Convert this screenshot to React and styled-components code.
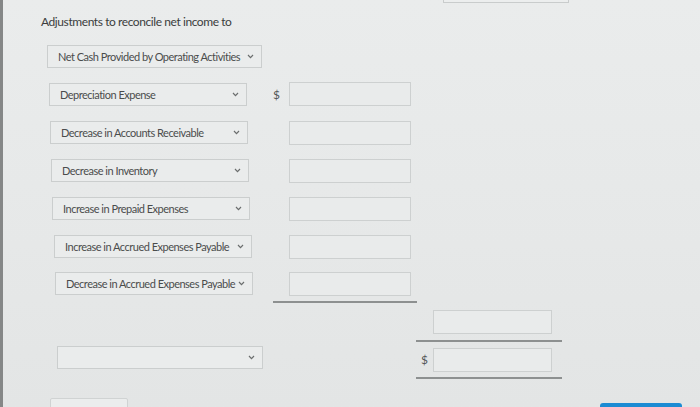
import React from 'react';
import styled, { createGlobalStyle } from 'styled-components';

const GlobalStyle = createGlobalStyle`
  html, body {
    margin: 0;
    padding: 0;
    background: #e7e9e9;
    overflow: hidden;
  }
`;

const Page = styled.div`
  width: 697px;
  height: 407px;
  overflow: hidden;
  border-left: 3px solid #858787;
  background: linear-gradient(180deg, #eaecec 0%, #e6e8e8 60%, #e3e5e5 100%);
  font-family: Lato, "Open Sans", sans-serif;
  color: #3f4141;
`;

const TopStub = styled.div`
  margin-left: 440px;
  width: 124px;
  height: 2px;
  border: 1px solid #c9cccc;
  border-top: none;
  background: #eceeee;
`;

const Heading = styled.div`
  margin: 9px 0 0 38px;
  font-size: 12px;
  line-height: 20px;
  color: #3b3d3d;
  letter-spacing: -0.42px;
`;

const Row = styled.div`
  display: grid;
  grid-template-columns: 270px 144px 146px;
  align-items: center;
  height: ${(p) => p.$h || 38}px;
  margin-top: ${(p) => p.$top || 0}px;
`;

const SelectCell = styled.div`
  padding-left: ${(p) => p.$indent}px;
`;

const SelectBox = styled.div`
  display: flex;
  align-items: center;
  justify-content: space-between;
  box-sizing: border-box;
  width: ${(p) => p.$w || 198}px;
  height: 23px;
  padding: 0 7px 0 ${(p) => p.$pad || 10}px;
  border: 1px solid #cbcece;
  background: #eaecec;
  font-size: 11px;
  color: #4a4c4c;
  letter-spacing: -0.5px;
  white-space: nowrap;
`;

const Chevron = () => (
  <svg width="7" height="5" viewBox="0 0 7 5" style={{ flexShrink: 0 }}>
    <path d="M1 1 L3.5 3.6 L6 1" fill="none" stroke="#6b6e6e" strokeWidth="1.2" />
  </svg>
);

const AmountCell = styled.div`
  display: flex;
  align-items: center;
  padding-left: ${(p) => p.$pad || 0}px;
  margin-top: ${(p) => p.$shift || 0}px;
`;

const Dollar = styled.span`
  width: ${(p) => p.$w || 16}px;
  font-size: 12px;
  color: #555858;
  visibility: ${(p) => (p.$show ? 'visible' : 'hidden')};
`;

const Input = styled.div`
  box-sizing: border-box;
  width: ${(p) => p.$w || 122}px;
  height: 24px;
  border: 1px solid #cdd0d0;
  background: #e9ebeb;
`;

const Rule = styled.div`
  margin-left: ${(p) => p.$left}px;
  width: ${(p) => p.$w}px;
  height: 2px;
  background: #8d9090;
`;

const Footer = styled.div`
  display: flex;
  align-items: flex-start;
  margin-top: 19px;
`;

const BottomStub = styled.div`
  margin-left: 47px;
  width: 76px;
  height: 14px;
  border: 1px solid #d0d3d3;
  border-radius: 2px;
  background: #ebeded;
`;

const BlueBar = styled.div`
  margin: 5px 0 0 472px;
  width: 82px;
  height: 6px;
  border-radius: 3px 3px 0 0;
  background: #1c8bd3;
`;

const rows = [
  { label: 'Depreciation Expense', indent: 46, dollar: true },
  { label: 'Decrease in Accounts Receivable', indent: 47, shift: 2 },
  { label: 'Decrease in Inventory', indent: 48, shift: 2 },
  { label: 'Increase in Prepaid Expenses', indent: 49, shift: 1 },
  { label: 'Increase in Accrued Expenses Payable', indent: 51, shift: 1 },
  { label: 'Decrease in Accrued Expenses Payable', indent: 52, shift: 1, h: 36 },
];

export default function App() {
  return (
    <>
      <GlobalStyle />
      <Page>
        <TopStub />
        <Heading>Adjustments to reconcile net income to</Heading>

        <Row $top={5}>
          <SelectCell $indent={44}>
            <SelectBox $w={215}>
              Net Cash Provided by Operating Activities
              <Chevron />
            </SelectBox>
          </SelectCell>
        </Row>

        {rows.map((r) => (
          <Row key={r.label} $h={r.h}>
            <SelectCell $indent={r.indent}>
              <SelectBox>
                {r.label}
                <Chevron />
              </SelectBox>
            </SelectCell>
            <AmountCell $shift={r.shift}>
              <Dollar $show={r.dollar}>$</Dollar>
              <Input />
            </AmountCell>
          </Row>
        ))}
        <Rule $left={270} $w={144} />

        <Row $h={37}>
          <div />
          <div />
          <AmountCell $pad={4}>
            <Dollar $w={12} />
            <Input $w={119} />
          </AmountCell>
        </Row>
        <Rule $left={413} $w={146} />

        <Row $h={35}>
          <SelectCell $indent={54}>
            <SelectBox $w={206} style={{ marginTop: -5 }}>
              <span />
              <Chevron />
            </SelectBox>
          </SelectCell>
          <div />
          <AmountCell $pad={4}>
            <Dollar $w={12} $show>$</Dollar>
            <Input $w={119} />
          </AmountCell>
        </Row>
        <Rule $left={413} $w={146} />

        <Footer>
          <BottomStub />
          <BlueBar />
        </Footer>
      </Page>
    </>
  );
}
